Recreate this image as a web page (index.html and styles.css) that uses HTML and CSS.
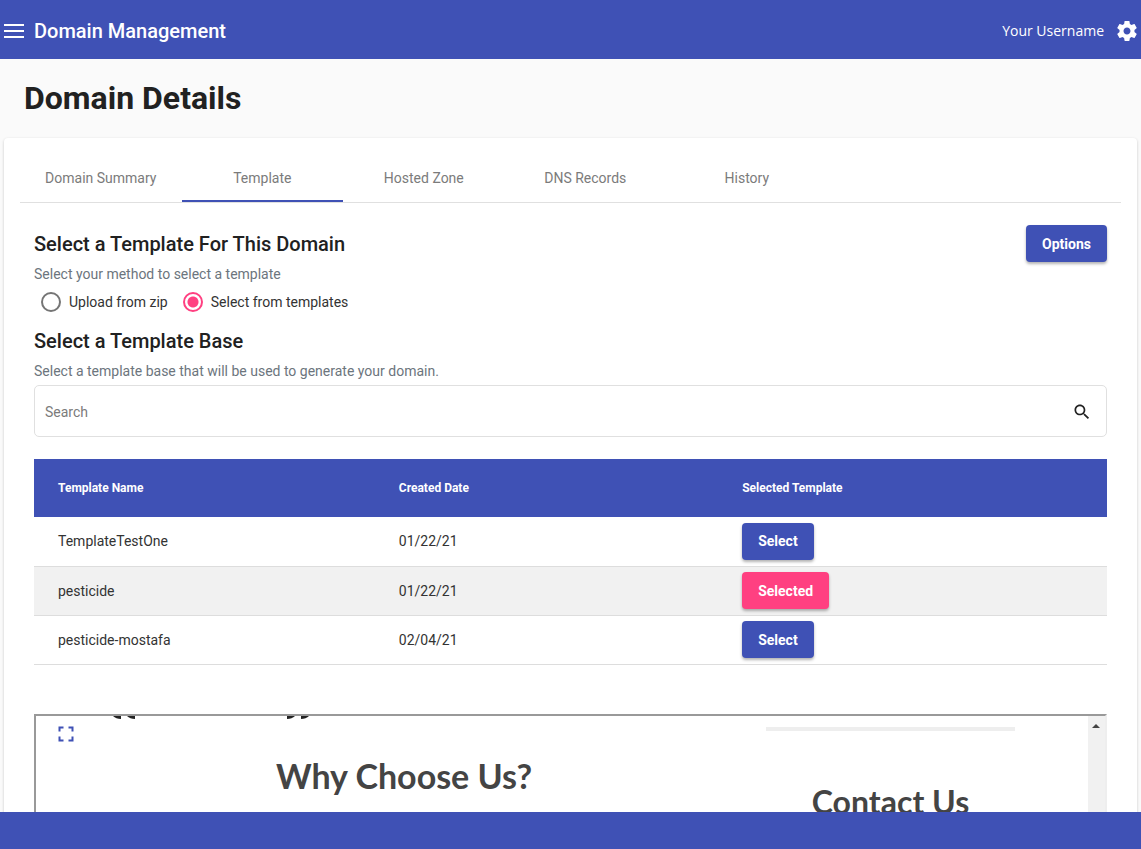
FILE: index.html
```html
<!DOCTYPE html>
<html lang="en">
<head>
<meta charset="utf-8">
<title>Domain Management</title>
<link rel="stylesheet" href="styles.css">
</head>
<body>
<header class="topbar">
  <button class="icon-button" aria-label="Menu"><svg width="24" height="24" viewBox="0 0 24 24" fill="currentColor"><path d="M2 19h20v-2H2v2zm0-6h20v-2H2v2zm0-6h20V5H2v2z"/></svg></button>
  <span class="brand">Domain Management</span>
  <span class="username">Your Username</span>
  <button class="icon-button" aria-label="Settings"><svg width="24" height="24" viewBox="0 0 24 24" fill="currentColor"><path d="M19.43 12.98c.04-.32.07-.64.07-.98s-.03-.66-.07-.98l2.11-1.65c.19-.15.24-.42.12-.64l-2-3.46c-.12-.22-.39-.3-.61-.22l-2.49 1c-.52-.4-1.08-.73-1.69-.98l-.38-2.65C14.46 2.18 14.25 2 14 2h-4c-.25 0-.46.18-.49.42l-.38 2.65c-.61.25-1.17.59-1.69.98l-2.49-1c-.23-.09-.49 0-.61.22l-2 3.46c-.13.22-.07.49.12.64l2.11 1.65c-.04.32-.07.65-.07.98s.03.66.07.98l-2.11 1.65c-.19.15-.24.42-.12.64l2 3.46c.12.22.39.3.61.22l2.49-1c.52.4 1.08.73 1.69.98l.38 2.65c.03.24.24.42.49.42h4c.25 0 .46-.18.49-.42l.38-2.65c.61-.25 1.17-.59 1.69-.98l2.49 1c.23.09.49 0 .61-.22l2-3.46c.12-.22.07-.49-.12-.64l-2.11-1.65zM12 15.500c-1.930 0-3.500-1.570-3.500-3.500s1.570-3.500 3.500-3.500 3.500 1.570 3.500 3.500-1.570 3.500-3.500 3.500z"/></svg></button>
</header>
<main class="page">
  <h1 class="page-title">Domain Details</h1>
  <section class="card">
    <nav class="tabs">
      <a class="tab" href="#summary">Domain Summary</a>
      <a class="tab tab-active" href="#template" aria-current="page">Template</a>
      <a class="tab" href="#zone">Hosted Zone</a>
      <a class="tab" href="#dns">DNS Records</a>
      <a class="tab" href="#history">History</a>
    </nav>
    <div class="content">
      <div class="intro">
        <div>
          <h2 class="heading">Select a Template For This Domain</h2>
          <p class="hint">Select your method to select a template</p>
        </div>
        <button class="button">Options</button>
      </div>
      <div class="radios">
        <label class="choice"><input class="radio" type="radio" name="method">Upload from zip</label>
        <label class="choice"><input class="radio" type="radio" name="method" checked>Select from templates</label>
      </div>
      <h2 class="heading">Select a Template Base</h2>
      <p class="hint">Select a template base that will be used to generate your domain.</p>
      <div class="search">
        <input class="search-input" type="text" placeholder="Search" aria-label="Search">
        <svg width="20" height="20" viewBox="0 0 24 24" fill="currentColor"><path d="M15.5 14h-.79l-.28-.27C15.41 12.59 16 11.11 16 9.5 16 5.91 13.09 3 9.5 3S3 5.91 3 9.5 5.91 16 9.5 16c1.61 0 3.09-.59 4.23-1.57l.27.28v.79l5 4.99L20.49 19l-4.99-5zm-6 0C7.01 14 5 11.99 5 9.5S7.01 5 9.5 5 14 7.01 14 9.5 11.99 14 9.5 14z"/></svg>
      </div>
      <table class="table">
        <thead>
          <tr><th>Template Name</th><th>Created Date</th><th>Selected Template</th></tr>
        </thead>
        <tbody>
          <tr><td>TemplateTestOne</td><td>01/22/21</td><td><button class="button">Select</button></td></tr>
          <tr class="row-selected"><td>pesticide</td><td>01/22/21</td><td><button class="button button-accent">Selected</button></td></tr>
          <tr><td>pesticide-mostafa</td><td>02/04/21</td><td><button class="button">Select</button></td></tr>
        </tbody>
      </table>
      <div class="preview">
        <button class="expand" aria-label="Full screen"><svg width="24" height="24" viewBox="0 0 24 24" fill="currentColor"><path d="M4.500 4.500h5v2h-3v3h-2zM14.500 4.500h5v5h-2v-3h-3zM4.500 14.500h2v3h3v2h-5zM17.500 14.500h2v5h-5v-2h3z"/></svg></button>
        <div class="preview-main">
          <svg class="quotes" width="198" height="4" viewBox="0 0 198 4" fill="#222"><path d="M0 0h8v3Q3 3 0 0zM14 0h8v3Q17 3 14 0zM174 0h8Q179 3 174 3zM188 0h8Q193 3 188 3z"/></svg>
          <h2 class="preview-title">Why Choose Us?</h2>
        </div>
        <div class="preview-side">
          <hr class="rule">
          <h3 class="preview-subtitle">Contact Us</h3>
        </div>
        <div class="scrollbar"><svg width="8" height="4" viewBox="0 0 8 4"><path d="M0 4L4 0l4 4z" fill="#444"/></svg></div>
      </div>
    </div>
  </section>
</main>
<footer class="footer"></footer>
</body>
</html>
```
FILE: styles.css
```css
* { box-sizing: border-box; }
body {
  margin: 0;
  height: 100vh;
  display: flex;
  flex-direction: column;
  overflow: hidden;
  background: #fafafa;
  color: #212121;
  font-family: Roboto, "Liberation Sans", sans-serif;
  font-size: 14px;
}
h1, h2, h3, p { margin: 0; }
button { font-family: inherit; cursor: pointer; }
svg { display: block; }

.topbar {
  flex: none;
  display: flex;
  align-items: center;
  height: 59px;
  padding: 3px 2px 0;
  background: #3f51b5;
  color: #fff;
}
.icon-button { border: 0; padding: 0; background: none; color: inherit; }
.brand { margin-left: 8px; font-size: 20px; font-weight: 500; }
.username {
  margin-left: auto;
  margin-right: 11px;
  padding-bottom: 2px;
  font-family: "Open Sans", sans-serif;
  font-size: 14px;
}

.page { flex: 1; min-height: 0; overflow: hidden; }
.page-title { padding: 19px 24px 20px; font-size: 32px; line-height: 40px; font-weight: 700; }
.card {
  margin: 0 4px;
  padding: 16px;
  border-radius: 4px;
  background: #fff;
  box-shadow: 0 1px 3px rgba(0, 0, 0, .2);
}

.tabs { display: flex; border-bottom: 1px solid #e0e0e0; }
.tab {
  width: 14.67%;
  height: 48px;
  line-height: 48px;
  text-align: center;
  text-decoration: none;
  color: #7b7b7b;
}
.tab-active { box-shadow: inset 0 -2px #3f51b5; }

.content { padding: 22px 14px 0; }
.intro { display: flex; justify-content: space-between; align-items: flex-start; }
.heading { padding-top: 3px; font-size: 20px; line-height: 32px; font-weight: 500; }
.hint { line-height: 28px; color: #6c757d; }
.radios { display: flex; gap: 15px; padding: 0 7px 6px; }
.choice { display: flex; align-items: center; gap: 8px; height: 28px; color: #333; }
.radio {
  appearance: none;
  width: 20px;
  height: 20px;
  margin: 0;
  border: 2px solid #757575;
  border-radius: 50%;
}
.radio:checked {
  border-color: #ff4081;
  background: radial-gradient(circle, #ff4081 5px, transparent 6px);
}

.button {
  height: 37px;
  padding: 0 16px;
  border: 0;
  border-radius: 4px;
  background: #3f51b5;
  color: #fff;
  font-size: 14px;
  font-weight: 700;
  box-shadow: 0 2px 3px rgba(0, 0, 0, .3);
}
.button-accent { background: #ff4081; }

.search {
  display: flex;
  align-items: center;
  height: 52px;
  padding: 2px 14px 0 10px;
  border: 1px solid #e0e0e0;
  border-radius: 5px;
}
.search-input {
  flex: 1;
  min-width: 0;
  height: 40px;
  padding: 0;
  border: 0;
  outline: 0;
  background: none;
  font: inherit;
}
.search-input::placeholder { color: #7b7b7b; }

.table { width: 100%; margin-top: 22px; border-collapse: collapse; table-layout: fixed; }
.table th {
  height: 58px;
  padding: 0;
  background: #3f51b5;
  color: #fff;
  font-size: 12px;
  font-weight: 700;
  text-align: left;
}
.table td { height: 49px; padding: 0; border-bottom: 1px solid #ddd; color: #333; }
.table th:first-child { width: 34%; }
.table th:nth-child(2) { width: 32%; }
.table th:first-child, .table td:first-child { padding-left: 24px; }
.row-selected { background: #f1f1f1; }

.preview {
  position: relative;
  display: grid;
  grid-template-columns: minmax(0, 730fr) minmax(0, 322fr) 17px;
  height: 400px;
  margin-top: 49px;
  border: 2px solid #999;
  border-right-color: #eee;
  font-family: Lato, sans-serif;
  color: #444;
}
.expand {
  position: absolute;
  left: 18px;
  top: 6px;
  padding: 0;
  border: 0;
  background: none;
  color: #3f51b5;
}
.preview-main { padding-left: 6px; }
.quotes { margin-left: 71px; }
.preview-title { padding-top: 34px; text-align: center; font-size: 34px; line-height: 44px; font-weight: 700; }
.preview-side { padding: 11px 73px 0 0; }
.rule { height: 4px; margin: 0; border: 0; background: #eee; }
.preview-subtitle { padding-top: 50px; text-align: center; font-size: 32px; line-height: 42px; font-weight: 700; }
.scrollbar { padding: 8px 4px; background: #f1f1f1; }

.footer { flex: none; height: 37px; background: #3f51b5; }
```
